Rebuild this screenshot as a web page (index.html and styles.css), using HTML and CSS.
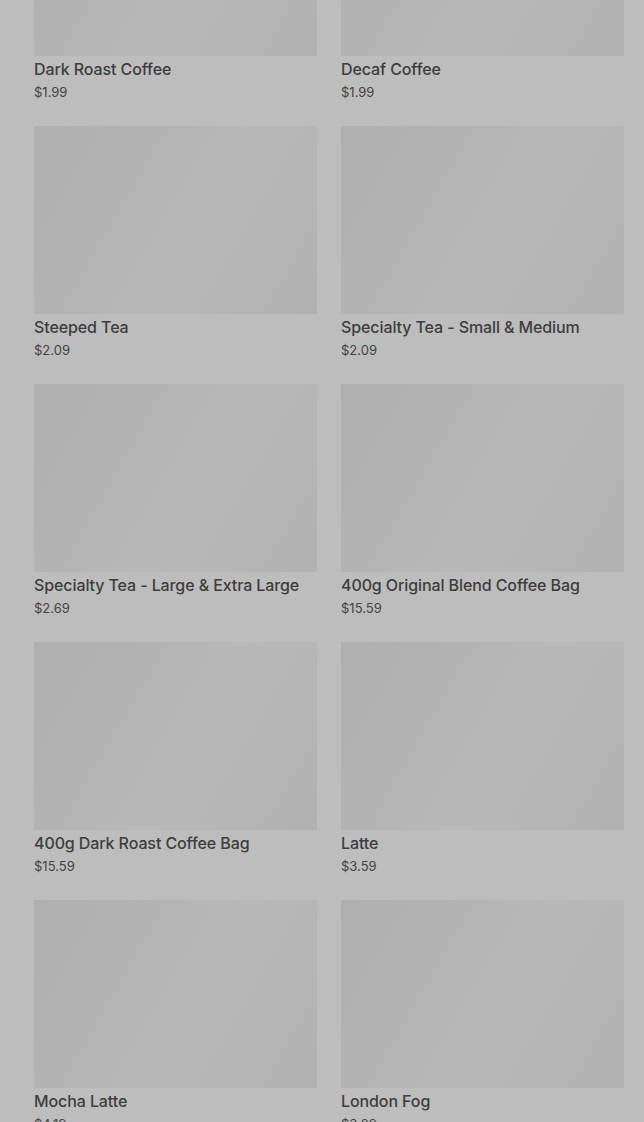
FILE: index.html
```html
<!DOCTYPE html>
<html>
<head>
<meta charset="utf-8">
<link rel="stylesheet" href="styles.css">
</head>
<body>
<div class="grid">
  <div class="card"><div class="thumb"></div><div class="name">Dark Roast Coffee</div><div class="price">$1.99</div></div>
  <div class="card"><div class="thumb"></div><div class="name">Decaf Coffee</div><div class="price">$1.99</div></div>
  <div class="card"><div class="thumb"></div><div class="name">Steeped Tea</div><div class="price">$2.09</div></div>
  <div class="card"><div class="thumb"></div><div class="name">Specialty Tea - Small &amp; Medium</div><div class="price">$2.09</div></div>
  <div class="card"><div class="thumb"></div><div class="name">Specialty Tea - Large &amp; Extra Large</div><div class="price">$2.69</div></div>
  <div class="card"><div class="thumb"></div><div class="name">400g Original Blend Coffee Bag</div><div class="price">$15.59</div></div>
  <div class="card"><div class="thumb"></div><div class="name">400g Dark Roast Coffee Bag</div><div class="price">$15.59</div></div>
  <div class="card"><div class="thumb"></div><div class="name">Latte</div><div class="price">$3.59</div></div>
  <div class="card"><div class="thumb"></div><div class="name">Mocha Latte</div><div class="price">$4.19</div></div>
  <div class="card"><div class="thumb"></div><div class="name">London Fog</div><div class="price">$3.29</div></div>
</div>
</body>
</html>
```
FILE: styles.css
```css
html, body {
  margin: 0;
  padding: 0;
  background: #bdbdbd;
  overflow: hidden;
  height: 1122px;
}
body {
  font-family: Inter, "Noto Sans", sans-serif;
  color: #3d3d3d;
}
.grid {
  display: grid;
  grid-template-columns: 283px 283px;
  column-gap: 24px;
  row-gap: 25px;
  padding: 0 20px 0 34px;
  margin-top: -132px;
}
.card {
  display: flex;
  flex-direction: column;
}
.thumb {
  height: 188px;
  background: linear-gradient(120deg, #afafaf 0%, #b3b3b3 30%, #b8b8b8 55%, #b5b5b5 80%, #b1b1b1 100%);
}
.name {
  margin-top: 1px;
  font-size: 16px;
  font-weight: 500;
  line-height: 24px;
  letter-spacing: -0.1px;
}
.price {
  margin-top: 2px;
  font-size: 13px;
  line-height: 18px;
  color: #444;
}
```
